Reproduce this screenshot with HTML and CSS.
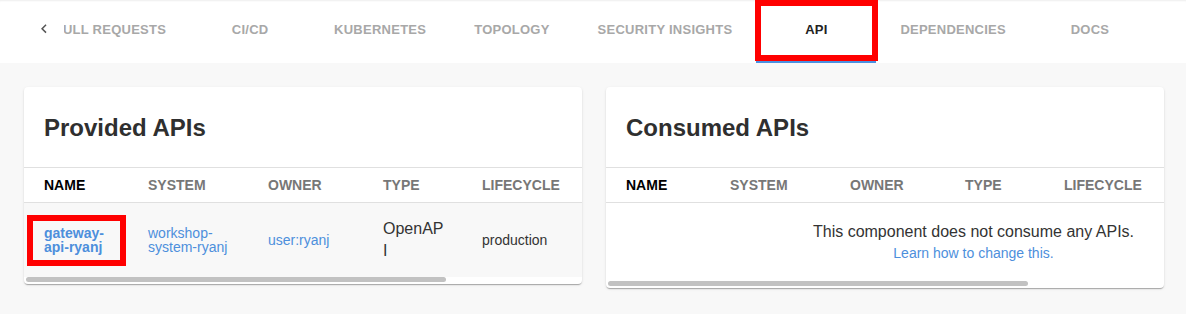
FILE: index.html
```html
<!DOCTYPE html>
<html lang="en">
<head>
<meta charset="utf-8">
<title>API</title>
<link rel="stylesheet" href="styles.css">
</head>
<body>
<div class="tabbar">
  <div class="scroll-btn">
    <svg class="chev" width="18" height="18" viewBox="0 0 24 24"><path d="M15.41 16.09l-4.58-4.59 4.58-4.59L14 5.5l-6 6 6 6z" fill="currentColor"/></svg>
  </div>
  <div class="scroller">
    <div class="tablist">
      <div class="tab">Pull Requests</div>
      <div class="tab">CI/CD</div>
      <div class="tab">Kubernetes</div>
      <div class="tab">Topology</div>
      <div class="tab">Security Insights</div>
      <div class="tab active">API</div>
      <div class="tab">Dependencies</div>
      <div class="tab">Docs</div>
    </div>
  </div>
</div>

<main class="content">
  <section class="card">
    <h2 class="card-title">Provided APIs</h2>
    <div class="table-wrap">
      <div class="table">
        <div class="row head">
          <div class="c c1 sorted">Name</div>
          <div class="c c2">System</div>
          <div class="c c3">Owner</div>
          <div class="c c4">Type</div>
          <div class="c c5">Lifecycle</div>
        </div>
        <div class="row body">
          <div class="c c1 marked"><a class="link strong">gateway-api-ryanj</a></div>
          <div class="c c2"><a class="link">workshop-system-ryanj</a></div>
          <div class="c c3"><a class="link">user:ryanj</a></div>
          <div class="c c4 type">OpenAPI</div>
          <div class="c c5 plain">production</div>
        </div>
      </div>
    </div>
    <div class="thumb"></div>
  </section>

  <section class="card">
    <h2 class="card-title">Consumed APIs</h2>
    <div class="table-wrap">
      <div class="table">
        <div class="row head">
          <div class="c c1 sorted">Name</div>
          <div class="c c2">System</div>
          <div class="c c3">Owner</div>
          <div class="c c4">Type</div>
          <div class="c c5">Lifecycle</div>
        </div>
        <div class="empty">
          <div class="empty-msg">This component does not consume any APIs.</div>
          <a class="link empty-link">Learn how to change this.</a>
        </div>
      </div>
    </div>
    <div class="thumb"></div>
  </section>
</main>
</body>
</html>
```
FILE: styles.css
```css
*, *::before, *::after { box-sizing: border-box; }

html, body {
  margin: 0;
  padding: 0;
}

body {
  width: 1186px;
  height: 314px;
  overflow: hidden;
  background: #f8f8f8;
  font-family: "Liberation Sans", Arial, Helvetica, sans-serif;
  color: #333;
}

/* ---------- tab bar ---------- */
.tabbar {
  display: flex;
  height: 63px;
  background: #fff;
  padding-left: 24px;
  box-shadow: inset 0 2px 2px -1px rgba(0, 0, 0, 0.07);
}

.scroll-btn {
  flex: 0 0 40px;
  display: flex;
  align-items: center;
  justify-content: center;
  padding-bottom: 5px;
  color: #555;
}

.chev { display: block; }

.scroller {
  flex: 1 1 auto;
  overflow: hidden;
}

.tablist {
  display: flex;
  height: 63px;
  margin-left: -34px;
}

.tab {
  flex: 0 0 auto;
  position: relative;
  min-width: 120px;
  padding: 0 24px 5px;
  display: flex;
  align-items: center;
  justify-content: center;
  font-size: 13px;
  font-weight: 700;
  letter-spacing: 0.25px;
  text-transform: uppercase;
  color: #a8a8a8;
  white-space: nowrap;
}

.tab.active {
  color: #222;
}

.tab.active::before {
  content: "";
  position: absolute;
  left: 0;
  right: 0;
  bottom: 0;
  height: 2px;
  background: #4a90e2;
}

.tab.active::after {
  content: "";
  position: absolute;
  left: -1px;
  right: -2px;
  top: 0;
  bottom: 2px;
  border: 6px solid #ff0000;
}

/* ---------- content ---------- */
.content {
  display: grid;
  grid-template-columns: 558px 558px;
  column-gap: 24px;
  align-items: start;
  padding: 24px 22px 0 24px;
}

.card {
  background: #fff;
  border-radius: 4px;
  box-shadow: 0 2px 1px -1px rgba(0, 0, 0, 0.18),
              0 1px 1px 0 rgba(0, 0, 0, 0.12),
              0 1px 3px 0 rgba(0, 0, 0, 0.1);
  padding-bottom: 2px;
  overflow: hidden;
}

.card-title {
  margin: 0;
  height: 81px;
  padding: 25px 20px 0;
  font-size: 24px;
  line-height: 32px;
  font-weight: 700;
  color: #2f2f2f;
  border-bottom: 1px solid #e0e0e0;
}

.table-wrap {
  overflow: hidden;
}

.table {
  width: 735px;
}

.row {
  display: grid;
  grid-template-columns: 124px 120px 115px 99px 277px;
  align-items: center;
}

.row.head {
  height: 35px;
  border-bottom: 1px solid #e0e0e0;
  font-size: 14px;
  font-weight: 700;
  text-transform: uppercase;
  color: #777;
}

.row.head .sorted { color: #000; }

.row.body {
  height: 74px;
  background: #f8f8f8;
  font-size: 14px;
}

.c { padding: 0 16px 0 0; }
.c1 { padding-left: 20px; padding-right: 34px; }
.c2 { padding-right: 16px; }
.c4 { padding-right: 37px; }

.link {
  color: #4d8fdc;
  text-decoration: none;
  line-height: 14.5px;
  display: block;
}

.link.strong { font-weight: 700; }

.type {
  font-size: 16px;
  line-height: 22px;
  color: #333;
  overflow-wrap: anywhere;
}

.plain {
  color: #333;
}

.marked {
  position: relative;
  align-self: stretch;
  display: flex;
  align-items: center;
}

.marked::after {
  content: "";
  position: absolute;
  left: 3px;
  top: 12px;
  width: 99px;
  height: 51px;
  border: 6px solid #ff0000;
}

.empty {
  height: 78px;
  padding-top: 19px;
  text-align: center;
}

.empty-msg {
  font-size: 16px;
  line-height: 20px;
  color: #333;
}

.empty-link {
  margin-top: 3px;
  font-size: 14px;
  line-height: 16px;
  display: inline-block;
}

.thumb {
  width: 420px;
  height: 5px;
  margin-left: 2px;
  border-radius: 3px;
  background: #c2c2c2;
}
```
